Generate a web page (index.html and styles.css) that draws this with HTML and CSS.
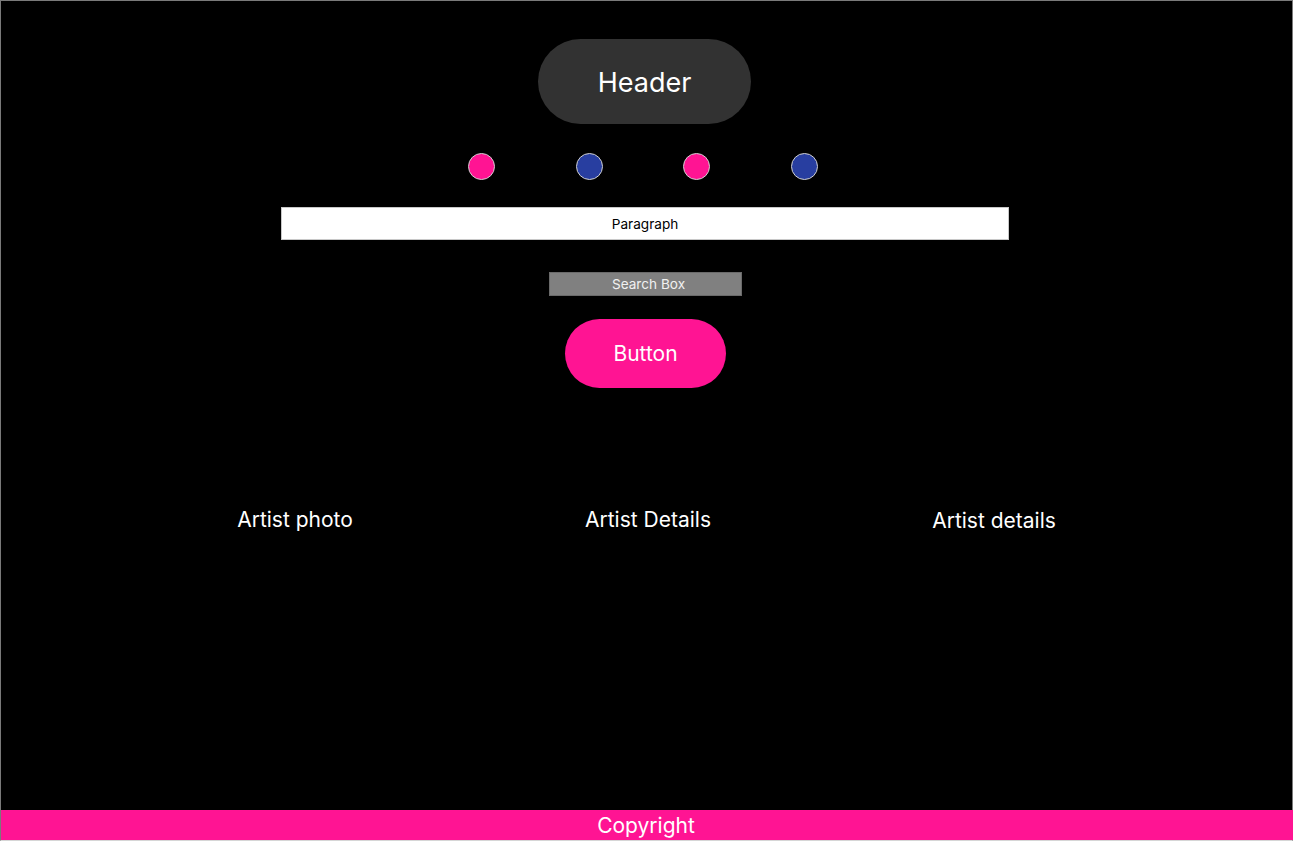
FILE: index.html
```html
<!DOCTYPE html>
<html>
<head>
<meta charset="utf-8">
<link rel="stylesheet" href="styles.css">
</head>
<body>
<div class="frame">
  <main class="main">
    <div class="header">Header</div>
    <div class="dots">
      <span class="dot pink"></span>
      <span class="dot blue"></span>
      <span class="dot pink"></span>
      <span class="dot blue"></span>
    </div>
    <div class="paragraph">Paragraph</div>
    <div class="search">Search Box</div>
    <div class="button">Button</div>
    <div class="artists">
      <div class="artist">Artist photo</div>
      <div class="artist">Artist Details</div>
      <div class="artist shift">Artist details</div>
    </div>
  </main>
  <footer class="footer">Copyright</footer>
</div>
</body>
</html>
```

FILE: styles.css
```css
html, body {
  margin: 0;
  padding: 0;
  background: #000;
}
body {
  font-family: Inter, "Noto Sans", "Liberation Sans", sans-serif;
  color: #fff;
}
.frame {
  box-sizing: border-box;
  width: 1293px;
  height: 841px;
  border: 1px solid #7a7a7a;
  border-bottom-color: #d6d6d6;
  display: flex;
  flex-direction: column;
  background: #000;
}
.main {
  flex: 1;
  display: flex;
  flex-direction: column;
  align-items: center;
  padding-top: 38px;
}
.header {
  box-sizing: border-box;
  width: 213px;
  height: 85px;
  border-radius: 43px;
  background: #323232;
  display: flex;
  align-items: center;
  justify-content: center;
  font-size: 27px;
  margin-left: -4px;
  padding-top: 2px;
}
.dots {
  display: flex;
  gap: 80.6px;
  margin-top: 29px;
  margin-left: -7px;
}
.dot {
  box-sizing: border-box;
  width: 27px;
  height: 27px;
  border-radius: 50%;
  border: 1px solid #d0d0d0;
}
.pink { background: #ff1493; }
.blue { background: #283ea0; }
.paragraph {
  box-sizing: border-box;
  margin-top: 27px;
  width: 728px;
  height: 33px;
  background: #fff;
  border: 1px solid #c8c8c8;
  color: #000;
  font-size: 13.6px;
  display: flex;
  align-items: center;
  justify-content: center;
  margin-left: -3px;
}
.search {
  box-sizing: border-box;
  margin-top: 32px;
  width: 193px;
  height: 24px;
  background: #808080;
  border: 1px solid #6a6a6a;
  color: #f0f0f0;
  font-size: 13.6px;
  display: flex;
  align-items: center;
  justify-content: center;
  margin-left: -2px;
  padding-left: 6px;
}
.button {
  margin-top: 23px;
  width: 161px;
  height: 69px;
  border-radius: 35px;
  background: #ff1493;
  display: flex;
  align-items: center;
  justify-content: center;
  font-size: 21px;
  margin-left: -2px;
}
.artists {
  margin-top: 120px;
  display: grid;
  grid-template-columns: 356px 350px 342px;
  margin-left: -11px;
}
.artist {
  text-align: center;
  font-size: 21px;
  line-height: 24px;
}
.artist.shift {
  margin-top: 1px;
}
.footer {
  height: 30px;
  background: #ff1493;
  display: flex;
  align-items: center;
  justify-content: center;
  font-size: 21px;
  margin-right: -1px;
  padding-right: 2px;
}
```
